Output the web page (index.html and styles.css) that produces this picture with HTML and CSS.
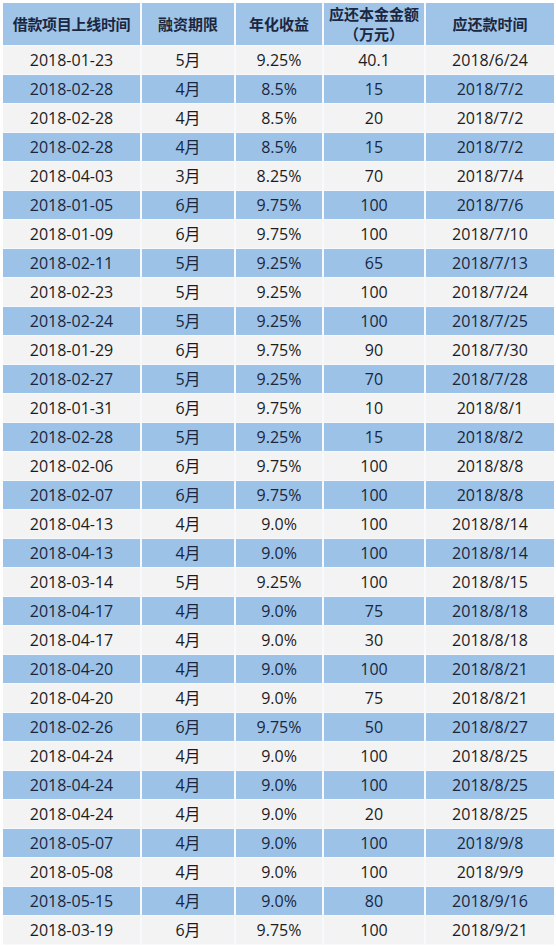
FILE: index.html
```html
<!DOCTYPE html>
<html lang="zh-CN">
<head>
<meta charset="utf-8">
<title>借款项目</title>
<link rel="stylesheet" href="styles.css">
</head>
<body>
<table class="grid">
<colgroup>
<col class="c1"><col class="c2"><col class="c3"><col class="c4"><col class="c5">
</colgroup>
<thead>
<tr class="head">
<th>借款项目上线时间</th><th>融资期限</th><th>年化收益</th><th>应还本金金额<br>（万元）</th><th>应还款时间</th>
</tr>
</thead>
<tbody>
<tr><td>2018-01-23</td><td>5月</td><td>9.25%</td><td>40.1</td><td>2018/6/24</td></tr>
<tr><td>2018-02-28</td><td>4月</td><td>8.5%</td><td>15</td><td>2018/7/2</td></tr>
<tr><td>2018-02-28</td><td>4月</td><td>8.5%</td><td>20</td><td>2018/7/2</td></tr>
<tr><td>2018-02-28</td><td>4月</td><td>8.5%</td><td>15</td><td>2018/7/2</td></tr>
<tr><td>2018-04-03</td><td>3月</td><td>8.25%</td><td>70</td><td>2018/7/4</td></tr>
<tr><td>2018-01-05</td><td>6月</td><td>9.75%</td><td>100</td><td>2018/7/6</td></tr>
<tr><td>2018-01-09</td><td>6月</td><td>9.75%</td><td>100</td><td>2018/7/10</td></tr>
<tr><td>2018-02-11</td><td>5月</td><td>9.25%</td><td>65</td><td>2018/7/13</td></tr>
<tr><td>2018-02-23</td><td>5月</td><td>9.25%</td><td>100</td><td>2018/7/24</td></tr>
<tr><td>2018-02-24</td><td>5月</td><td>9.25%</td><td>100</td><td>2018/7/25</td></tr>
<tr><td>2018-01-29</td><td>6月</td><td>9.75%</td><td>90</td><td>2018/7/30</td></tr>
<tr><td>2018-02-27</td><td>5月</td><td>9.25%</td><td>70</td><td>2018/7/28</td></tr>
<tr><td>2018-01-31</td><td>6月</td><td>9.75%</td><td>10</td><td>2018/8/1</td></tr>
<tr><td>2018-02-28</td><td>5月</td><td>9.25%</td><td>15</td><td>2018/8/2</td></tr>
<tr><td>2018-02-06</td><td>6月</td><td>9.75%</td><td>100</td><td>2018/8/8</td></tr>
<tr><td>2018-02-07</td><td>6月</td><td>9.75%</td><td>100</td><td>2018/8/8</td></tr>
<tr><td>2018-04-13</td><td>4月</td><td>9.0%</td><td>100</td><td>2018/8/14</td></tr>
<tr><td>2018-04-13</td><td>4月</td><td>9.0%</td><td>100</td><td>2018/8/14</td></tr>
<tr><td>2018-03-14</td><td>5月</td><td>9.25%</td><td>100</td><td>2018/8/15</td></tr>
<tr><td>2018-04-17</td><td>4月</td><td>9.0%</td><td>75</td><td>2018/8/18</td></tr>
<tr><td>2018-04-17</td><td>4月</td><td>9.0%</td><td>30</td><td>2018/8/18</td></tr>
<tr><td>2018-04-20</td><td>4月</td><td>9.0%</td><td>100</td><td>2018/8/21</td></tr>
<tr><td>2018-04-20</td><td>4月</td><td>9.0%</td><td>75</td><td>2018/8/21</td></tr>
<tr><td>2018-02-26</td><td>6月</td><td>9.75%</td><td>50</td><td>2018/8/27</td></tr>
<tr><td>2018-04-24</td><td>4月</td><td>9.0%</td><td>100</td><td>2018/8/25</td></tr>
<tr><td>2018-04-24</td><td>4月</td><td>9.0%</td><td>100</td><td>2018/8/25</td></tr>
<tr><td>2018-04-24</td><td>4月</td><td>9.0%</td><td>20</td><td>2018/8/25</td></tr>
<tr><td>2018-05-07</td><td>4月</td><td>9.0%</td><td>100</td><td>2018/9/8</td></tr>
<tr><td>2018-05-08</td><td>4月</td><td>9.0%</td><td>100</td><td>2018/9/9</td></tr>
<tr><td>2018-05-15</td><td>4月</td><td>9.0%</td><td>80</td><td>2018/9/16</td></tr>
<tr><td>2018-03-19</td><td>6月</td><td>9.75%</td><td>100</td><td>2018/9/21</td></tr>
</tbody>
</table>
</body>
</html>
```

FILE: styles.css
```css
html, body {
  margin: 0;
  background: #ffffff;
}
body {
  padding: 3px 2px 0 3px;
  font-family: "Open Sans", "Noto Sans CJK SC", sans-serif;
}
.grid {
  width: 551px;
  table-layout: fixed;
  border-collapse: collapse;
}
.c1 { width: 138px; }
.c2 { width: 94px; }
.c3 { width: 88px; }
.c4 { width: 102px; }
.c5 { width: 129px; }
.grid th,
.grid td {
  padding: 0;
  text-align: center;
  vertical-align: middle;
  border: 1px solid #f7f9fc;
  border-width: 1px 2px;
  overflow: hidden;
  white-space: nowrap;
}
.grid th {
  height: 42px;
  background: #9fc4e8;
  color: #1b2740;
  font-family: "Noto Sans CJK SC", sans-serif;
  font-weight: 700;
  font-size: 15px;
  line-height: 20px;
}
.grid th:first-child {
  letter-spacing: -0.3px;
}
.grid td {
  height: 28px;
  font-size: 16px;
  line-height: 20px;
  color: #1c1c1f;
  background: #f3f3f3;
}
.grid tbody tr:nth-child(even) td {
  background: #9cc3e7;
  color: #1a2640;
}
.grid th:first-child,
.grid td:first-child {
  border-left: 0;
}
.grid th:last-child,
.grid td:last-child {
  border-right: 0;
}
.grid thead th {
  border-top: 0;
}
```
